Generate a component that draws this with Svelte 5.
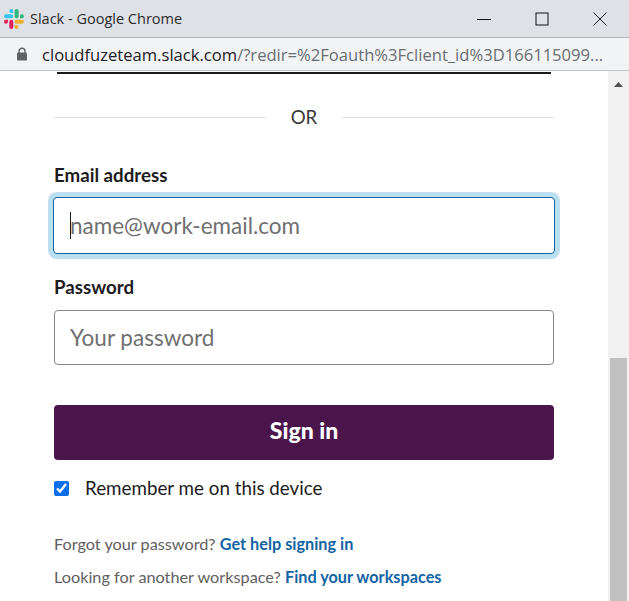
<script>
    let remember = true;
</script>

<div class="window">
    <header class="titlebar">
        <svg class="logo" viewBox="0 0 54 54" width="20" height="20">
            <path d="M19.712.133a5.381 5.381 0 0 0-5.376 5.387 5.381 5.381 0 0 0 5.376 5.386h5.376V5.52A5.381 5.381 0 0 0 19.712.133m0 14.365H5.376A5.381 5.381 0 0 0 0 19.884a5.381 5.381 0 0 0 5.376 5.387h14.336a5.381 5.381 0 0 0 5.376-5.387 5.381 5.381 0 0 0-5.376-5.386" fill="#36c5f0" />
            <path d="M53.76 19.884a5.381 5.381 0 0 0-5.376-5.386 5.381 5.381 0 0 0-5.376 5.386v5.387h5.376a5.381 5.381 0 0 0 5.376-5.387m-14.336 0V5.52A5.381 5.381 0 0 0 34.048.133a5.381 5.381 0 0 0-5.376 5.387v14.364a5.381 5.381 0 0 0 5.376 5.387 5.381 5.381 0 0 0 5.376-5.387" fill="#2eb67d" />
            <path d="M34.048 54a5.381 5.381 0 0 0 5.376-5.387 5.381 5.381 0 0 0-5.376-5.386h-5.376v5.386A5.381 5.381 0 0 0 34.048 54m0-14.365h14.336a5.381 5.381 0 0 0 5.376-5.386 5.381 5.381 0 0 0-5.376-5.387H34.048a5.381 5.381 0 0 0-5.376 5.387 5.381 5.381 0 0 0 5.376 5.386" fill="#ecb22e" />
            <path d="M0 34.249a5.381 5.381 0 0 0 5.376 5.386 5.381 5.381 0 0 0 5.376-5.386v-5.387H5.376A5.381 5.381 0 0 0 0 34.25m14.336-.001v14.364A5.381 5.381 0 0 0 19.712 54a5.381 5.381 0 0 0 5.376-5.387V34.25a5.381 5.381 0 0 0-5.376-5.387 5.381 5.381 0 0 0-5.376 5.387" fill="#e01e5a" />
        </svg>
        <span class="title">Slack - Google Chrome</span>
        <div class="controls">
            <svg viewBox="0 0 14 14" width="14" height="14"><path d="M0 7.5H14" stroke="#111" fill="none" /></svg>
            <svg viewBox="0 0 14 14" width="14" height="14"><rect x="1" y="1" width="12" height="12" stroke="#111" fill="none" /></svg>
            <svg viewBox="0 0 14 14" width="14" height="14"><path d="M0.5 0.5L13.5 13.5M13.5 0.5L0.5 13.5" stroke="#222" fill="none" /></svg>
        </div>
    </header>

    <div class="addressbar">
        <svg class="lock" viewBox="0 0 12 14" width="12" height="14">
            <path d="M3 6V4.2a3 3 0 0 1 6 0V6" stroke="#5f6368" stroke-width="1.4" fill="none" />
            <rect x="1" y="5.6" width="10" height="8" rx="1.2" fill="#5f6368" />
        </svg>
        <span class="url"><span class="host">cloudfuzeteam.slack.com</span>/?redir=%2Foauth%3Fclient_id%3D166115099...</span>
    </div>

    <div class="viewport">
        <main class="page">
            <div class="prev-button"></div>

            <div class="divider">
                <hr />
                <span>OR</span>
                <hr />
            </div>

            <label class="field-label" for="email">Email address</label>
            <div class="input focused">
                <span class="caret"></span>
                <input id="email" type="text" placeholder="name@work-email.com" />
            </div>

            <label class="field-label second" for="password">Password</label>
            <div class="input">
                <input id="password" type="password" placeholder="Your password" />
            </div>

            <button class="signin">Sign in</button>

            <label class="remember">
                <input type="checkbox" bind:checked={remember} />
                <span>Remember me on this device</span>
            </label>

            <p class="help first">Forgot your password? <a href="#help">Get help signing in</a></p>
            <p class="help">Looking for another workspace? <a href="#find">Find your workspaces</a></p>
        </main>

        <div class="scrollbar">
            <svg class="arrow" viewBox="0 0 9 5" width="9" height="5"><path d="M4.5 0L9 5H0Z" fill="#505050" /></svg>
            <div class="thumb"></div>
        </div>
    </div>
</div>

<style>
    :global(body) {
        margin: 0;
        background: #fff;
        overflow: hidden;
    }
    .window {
        width: 629px;
        height: 601px;
        display: flex;
        flex-direction: column;
        overflow: hidden;
        font-family: Lato, "Open Sans", sans-serif;
        color: #1d1c1d;
    }
    .titlebar {
        flex: none;
        box-sizing: border-box;
        display: flex;
        align-items: center;
        height: 38px;
        padding-left: 4px;
        background: #dee1e6;
        border-bottom: 1px solid #b4b6ba;
    }
    .logo {
        margin-right: 6px;
    }
    .title {
        font-family: "Open Sans", "Noto Sans", sans-serif;
        font-size: 14.5px;
        color: #2a2a2a;
    }
    .controls {
        margin-left: auto;
        display: flex;
        gap: 44px;
        padding-right: 22px;
    }
    .addressbar {
        height: 33px;
        flex: none;
        box-sizing: border-box;
        display: flex;
        align-items: center;
        padding-left: 16px;
        background: #f1f3f4;
        border-bottom: 1px solid #c4c6c9;
    }
    .lock {
        margin-right: 14px;
    }
    .url {
        font-family: "Open Sans", "Noto Sans", sans-serif;
        font-size: 16.6px;
        color: #6a6e73;
        white-space: nowrap;
    }
    .host {
        color: #1d2126;
    }
    .viewport {
        flex: 1;
        min-height: 0;
        display: flex;
    }
    .page {
        flex: 1;
        box-sizing: border-box;
        padding: 0 54px;
    }
    .prev-button {
        height: 2px;
        margin: 1px 3px 0;
        background: #1d1c1d;
    }
    .divider {
        display: flex;
        align-items: center;
        margin-top: 33px;
        height: 20px;
        font-size: 18.7px;
        color: #3b3a3b;
    }
    .divider hr {
        flex: 1;
        margin: 0;
        border: 0;
        border-top: 1px solid #dddddd;
    }
    .divider span {
        width: 76px;
        text-align: center;
    }
    .field-label {
        display: block;
        margin-top: 36px;
        font-size: 18.7px;
        font-weight: 700;
        line-height: 24px;
        color: #1d1c1d;
    }
    .field-label.second {
        margin-top: 21px;
    }
    .input {
        position: relative;
        height: 55px;
        margin-top: 11px;
        box-sizing: border-box;
        border: 1px solid #868686;
        border-radius: 4px;
        background: #fff;
    }
    .input.focused {
        height: 57px;
        margin: 10px -1px 0;
        border-color: #1264a3;
        box-shadow: 0 0 0 5px #b9dff0;
    }
    .input input {
        width: 100%;
        height: 100%;
        box-sizing: border-box;
        border: 0;
        outline: 0;
        padding: 0 15px;
        background: transparent;
        font-family: inherit;
        font-size: 22.5px;
    }
    .input.focused input {
        padding: 0 16px;
    }
    .input input::placeholder {
        color: #6f6f70;
        opacity: 1;
    }
    .caret {
        position: absolute;
        left: 16px;
        top: 14px;
        width: 1px;
        height: 27px;
        background: #1d1c1d;
    }
    .signin {
        display: block;
        width: 100%;
        height: 55px;
        margin-top: 40px;
        padding: 0 0 5px;
        border: 0;
        border-radius: 4px;
        background: #4a154b;
        color: #fff;
        font-family: inherit;
        font-size: 23px;
        font-weight: 900;
    }
    .remember {
        display: flex;
        align-items: center;
        margin-top: 16px;
        font-size: 18.8px;
        line-height: 24px;
        color: #1d1c1d;
    }
    .remember input {
        width: 15px;
        height: 15px;
        margin: 0 16px 0 0;
        accent-color: #0b6fe8;
    }
    .help {
        margin: 0;
        font-size: 16.25px;
        line-height: 20px;
        color: #616061;
    }
    .help.first {
        margin-top: 34px;
    }
    .help + .help {
        margin-top: 13px;
    }
    .help a {
        color: #1264a3;
        font-weight: 700;
        text-decoration: none;
    }
    .scrollbar {
        position: relative;
        flex: none;
        width: 21px;
        background: #f1f1f1;
    }
    .arrow {
        position: absolute;
        left: 6px;
        top: 11px;
    }
    .thumb {
        position: absolute;
        left: 2px;
        right: 2px;
        top: 287px;
        bottom: 0;
        background: #c1c1c1;
    }
</style>
